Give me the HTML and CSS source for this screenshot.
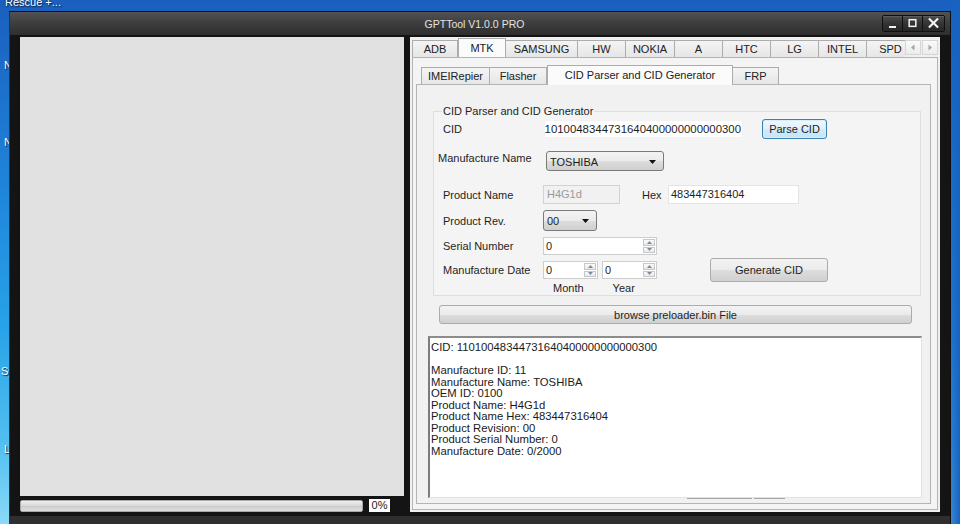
FILE: index.html
```html
<!DOCTYPE html>
<html>
<head>
<meta charset="utf-8">
<title>GPTTool V1.0.0 PRO</title>
<link rel="stylesheet" href="styles.css">
</head>
<body>
<div class="desktop">
  <div class="desk-label">Rescue +...</div>
  <span class="desk-icon di1">Ne</span>
  <span class="desk-icon di2">Ne</span>
  <span class="desk-icon di3">Sy</span>
  <span class="desk-icon di4">Lo</span>

  <div class="window">
    <div class="titlebar">
      <span class="title">GPTTool V1.0.0 PRO</span>
      <div class="controls">
        <div class="cbtn cmin"><svg width="19" height="15" viewBox="0 0 19 15"><rect x="6" y="10" width="7" height="2" fill="#f2f2f2"/></svg></div>
        <div class="cbtn cmax"><svg width="20" height="15" viewBox="0 0 20 15"><rect x="6.5" y="3.5" width="7" height="7" fill="none" stroke="#f2f2f2" stroke-width="1.6"/></svg></div>
        <div class="cbtn cclose"><svg width="22" height="15" viewBox="0 0 22 15"><path d="M7 3 L15 11 M15 3 L7 11" stroke="#f4f4f4" stroke-width="2.2" stroke-linecap="square"/></svg></div>
      </div>
    </div>

    <div class="wbody">
      <div class="leftcol">
        <div class="leftpanel"></div>
        <div class="progress-row">
          <div class="progress"></div>
          <span class="pct">0%</span>
        </div>
      </div>

      <div class="rightpanel">
        <div class="tabstrip">
          <div class="tablist">
            <div class="tab w46">ADB</div>
            <div class="tab w48 active">MTK</div>
            <div class="tab w72">SAMSUNG</div>
            <div class="tab w48">HW</div>
            <div class="tab w49">NOKIA</div>
            <div class="tab w48">A</div>
            <div class="tab w48">HTC</div>
            <div class="tab w48">LG</div>
            <div class="tab w48">INTEL</div>
            <div class="tab w48">SPD</div>
          </div>
          <div class="scrollbtns">
            <div class="sbtn"><svg width="6" height="7" viewBox="0 0 6 7"><path d="M4.5 0.5 L1 3.5 L4.5 6.5 Z" fill="#9aa6b8"/></svg></div>
            <div class="sbtn"><svg width="6" height="7" viewBox="0 0 6 7"><path d="M1.5 0.5 L5 3.5 L1.5 6.5 Z" fill="#9aa6b8"/></svg></div>
          </div>
        </div>

        <div class="tabpage">
          <div class="subtabs">
            <div class="tab w69">IMEIRepier</div>
            <div class="tab w57">Flasher</div>
            <div class="tab w186 active">CID Parser and CID Generator</div>
            <div class="tab w46">FRP</div>
          </div>

          <div class="subpage">
            <fieldset class="group">
              <legend>CID Parser and CID Generator</legend>

              <div class="row r1">
                <span class="lbl lbl-cid">CID</span>
                <div class="field cidbox"><span>11010048344731640400000000000300</span></div>
                <div class="btn parse">Parse CID</div>
              </div>

              <div class="row r2">
                <span class="lbl lbl-mname">Manufacture Name</span>
                <div class="select sel-mname"><span>TOSHIBA</span><svg width="7" height="4" viewBox="0 0 7 4"><path d="M0 0 H7 L3.5 4 Z" fill="#111"/></svg></div>
              </div>

              <div class="row r3">
                <span class="lbl">Product Name</span>
                <div class="field pname">H4G1d</div>
                <span class="hexlbl">Hex</span>
                <div class="field hexbox">483447316404</div>
              </div>

              <div class="row r4">
                <span class="lbl">Product Rev.</span>
                <div class="select sel-rev"><span>00</span><svg width="7" height="4" viewBox="0 0 7 4"><path d="M0 0 H7 L3.5 4 Z" fill="#111"/></svg></div>
              </div>

              <div class="row r5">
                <span class="lbl">Serial Number</span>
                <div class="spin sp-serial">
                  <span class="val">0</span>
                  <div class="arrows">
                    <div class="arr"><svg width="5" height="3" viewBox="0 0 5 3"><path d="M0 3 L2.5 0 L5 3 Z" fill="#7c8aa0"/></svg></div>
                    <div class="arr"><svg width="5" height="3" viewBox="0 0 5 3"><path d="M0 0 L2.5 3 L5 0 Z" fill="#7c8aa0"/></svg></div>
                  </div>
                </div>
              </div>

              <div class="row r6">
                <span class="lbl">Manufacture Date</span>
                <div class="spin sp-date">
                  <span class="val">0</span>
                  <div class="arrows">
                    <div class="arr"><svg width="5" height="3" viewBox="0 0 5 3"><path d="M0 3 L2.5 0 L5 3 Z" fill="#7c8aa0"/></svg></div>
                    <div class="arr"><svg width="5" height="3" viewBox="0 0 5 3"><path d="M0 0 L2.5 3 L5 0 Z" fill="#7c8aa0"/></svg></div>
                  </div>
                </div>
                <div class="spin sp-date sp-year">
                  <span class="val">0</span>
                  <div class="arrows">
                    <div class="arr"><svg width="5" height="3" viewBox="0 0 5 3"><path d="M0 3 L2.5 0 L5 3 Z" fill="#7c8aa0"/></svg></div>
                    <div class="arr"><svg width="5" height="3" viewBox="0 0 5 3"><path d="M0 0 L2.5 3 L5 0 Z" fill="#7c8aa0"/></svg></div>
                  </div>
                </div>
                <div class="btn generate">Generate CID</div>
              </div>

              <div class="row r7">
                <span class="month">Month</span>
                <span class="year">Year</span>
              </div>
            </fieldset>

            <div class="btn browse">browse preloader.bin File</div>

            <div class="output">CID: 11010048344731640400000000000300

Manufacture ID: 11
Manufacture Name: TOSHIBA
OEM ID: 0100
Product Name: H4G1d
Product Name Hex: 483447316404
Product Revision: 00
Product Serial Number: 0
Manufacture Date: 0/2000</div>
            <div class="scrap"><span class="s1"></span><span class="s2"></span></div>
          </div>
        </div>
      </div>
    </div>
  </div>
</div>
</body>
</html>
```
FILE: styles.css
```css
* { box-sizing: border-box; margin: 0; padding: 0; }

html, body { width: 960px; height: 524px; overflow: hidden; }

body {
  font-family: "Liberation Sans", Arial, sans-serif;
  font-size: 11px;
  color: #1e1e1e;
  background:
    linear-gradient(to right, rgba(21, 96, 192, 0) 0%, rgba(21, 96, 192, 0) 97%, #1762c2 100%),
    linear-gradient(180deg, #1a5fbd 0%, #1f84d9 35%, #27a2e8 62%, #52c0f0 85%, #8ad9f7 100%);
}

.desktop {
  position: relative;
  width: 960px;
  height: 524px;
  padding: 12px 0 0 10px;
}

.desk-label {
  position: absolute;
  left: 5px;
  top: -4px;
  color: #fff;
  font-size: 11px;
  text-shadow: 0 0 2px #0b2a55, 1px 1px 1px #0b2a55;
}

.desk-icon {
  position: absolute;
  left: 4px;
  color: #fff;
  font-size: 11px;
  text-shadow: 1px 1px 1px #123;
}
.di1 { top: 59px; }
.di2 { top: 136px; }
.di3 { top: 365px; left: 1px; }
.di4 { top: 443px; }

.window {
  position: relative;
  z-index: 1;
  width: 940px;
  height: 520px;
  background: #2f2f2f;
  box-shadow: -1px 0 0 #3b3030, 0 0 0 1px #0e0e0e;
}

/* title bar */
.titlebar {
  height: 23px;
  display: grid;
  grid-template-columns: 1fr auto 1fr;
  align-items: center;
  padding-right: 5px;
  background: linear-gradient(#525252, #3d3d3d 50%, #2e2e2e);
}
.title {
  grid-column: 2;
  color: #e2e2e2;
  font-size: 10.5px;
  margin-right: 6px;
}
.controls {
  grid-column: 3;
  justify-self: end;
  display: flex;
  height: 17px;
  border: 1px solid #101010;
  border-radius: 2px;
  overflow: hidden;
}
.cbtn {
  display: flex;
  align-items: center;
  justify-content: center;
  background: linear-gradient(#4c4c4c, #343434 50%, #262626);
  box-shadow: inset 0 1px 0 #5c5c5c;
}
.cbtn + .cbtn { border-left: 1px solid #101010; }
.cmin { width: 19px; }
.cmax { width: 20px; }
.cclose { width: 22px; }

/* window body */
.wbody {
  display: flex;
  gap: 6px;
  height: 481px;
  padding: 2px 10px 4px;
  background: #141414;
}

.leftcol {
  width: 384px;
  display: flex;
  flex-direction: column;
  gap: 3px;
}
.leftpanel {
  height: 460px;
  background: #e1e1e1;
}
.progress-row {
  display: flex;
  align-items: center;
  gap: 6px;
  height: 13px;
}
.progress {
  width: 343px;
  height: 12px;
  border: 1px solid #a9a9a9;
  border-radius: 2px;
  background: linear-gradient(#f0f0f0, #d8d8d8 45%, #cdcdcd 55%, #dedede);
}
.pct {
  width: 21px;
  height: 13px;
  background: #fff;
  line-height: 13px;
  text-align: center;
  color: #222;
}

.rightpanel {
  width: 530px;
  background: #f0f0f0;
  padding: 1px 2px 2px;
  display: flex;
  flex-direction: column;
}

/* tabs */
.tabstrip {
  display: flex;
  height: 19px;
  position: relative;
  z-index: 1;
}
.tablist {
  display: flex;
  align-items: flex-end;
  width: 493px;
  overflow: hidden;
}
.tab {
  flex: none;
  height: 17px;
  display: flex;
  align-items: center;
  justify-content: center;
  border: 1px solid #acacac;
  border-bottom: none;
  border-left: none;
  background: linear-gradient(#f4f4f4, #e6e6e6);
  color: #222;
  white-space: nowrap;
}
.tab:first-child { border-left: 1px solid #acacac; }
.tab.active {
  height: 20px;
  margin-bottom: -1px;
  background: #fbfbfb;
  border-left: 1px solid #acacac;
  padding-bottom: 2px;
}
.tab.active + .tab { border-left: none; }
.w46 { width: 46px; }
.w48 { width: 48px; }
.w49 { width: 49px; }
.w57 { width: 57px; }
.w69 { width: 69px; }
.w72 { width: 72px; }
.w186 { width: 186px; }

.scrollbtns {
  display: flex;
  gap: 1px;
  padding-top: 2px;
}
.sbtn {
  width: 16px;
  height: 15px;
  display: flex;
  align-items: center;
  justify-content: center;
  border: 1px solid #d6d6d6;
  background: linear-gradient(#fafafa, #ececec);
}

.tabpage {
  flex: 1;
  display: flex;
  flex-direction: column;
  border: 1px solid #b4b4b4;
  background: #f4f4f4;
  padding: 7px 6px 5px 3px;
}

.subtabs {
  display: flex;
  align-items: flex-end;
  height: 19px;
  padding-left: 5px;
  position: relative;
  z-index: 1;
}

.subpage {
  flex: 1;
  border: 1px solid #b4b4b4;
  background: #f1f1f1;
  display: flex;
  flex-direction: column;
}

/* group box */
.group {
  margin: 20px 9px 0 16px;
  border: 1px solid #dedede;
  background: #f4f4f4;
  padding: 0 0 1px 9px;
}
.group legend {
  margin-left: -1px;
  padding: 0 1px;
  line-height: 13px;
  color: #1e1e1e;
}

.row {
  display: flex;
  align-items: center;
}
.lbl { width: 100px; flex: none; }

.field {
  height: 19px;
  border: 1px solid #e4e4e4;
  background: #fff;
  padding-left: 2px;
  line-height: 17px;
  white-space: nowrap;
}

.btn {
  display: flex;
  align-items: center;
  justify-content: center;
  border: 1px solid #acacac;
  border-radius: 3px;
  background: linear-gradient(#f3f3f3, #ebebeb 50%, #dddddd 51%, #d0d0d0);
  color: #1e1e1e;
}

.select {
  display: flex;
  align-items: center;
  justify-content: space-between;
  border: 1px solid #7a7a7a;
  border-radius: 3px;
  background: linear-gradient(#f3f3f3, #ebebeb 50%, #dddddd 51%, #cfcfcf);
  padding: 1px 7px 0 3px;
}

.r1 { height: 20px; margin-top: 1px; }
.lbl-cid { width: 101px; }
.cidbox {
  width: 199px;
  height: 18px;
  display: flex;
  justify-content: flex-end;
  overflow: hidden;
  padding: 0 1px 0 0;
  border-color: #f2f2f2;
  font-size: 11.4px;
}
.parse {
  width: 65px;
  height: 20px;
  margin-left: 19px;
  border-color: #3c7fb1;
  background: linear-gradient(#eef7fd, #e2f1fb 50%, #d2eaf9 51%, #c6e4f7);
  box-shadow: inset 0 0 0 1px #d9eefb;
}

.r2 { height: 20px; margin-top: 12px; align-items: flex-start; }
.lbl-mname { width: 108px; margin-left: -5px; margin-top: 1px; }
.sel-mname { width: 118px; height: 20px; }

.r3 { height: 19px; margin-top: 14px; }
.pname {
  width: 77px;
  background: #f1f1f1;
  border-color: #d2d2d2;
  color: #9a9a9a;
  padding-left: 3px;
}
.hexlbl { width: 26px; margin-left: 22px; }
.hexbox { width: 131px; }

.r4 { height: 21px; margin-top: 6px; }
.sel-rev { width: 54px; height: 21px; }

.spin {
  display: flex;
  height: 18px;
  border: 1px solid #cdcdcd;
  background: #fff;
  padding: 1px;
}
.spin .val {
  flex: 1;
  line-height: 15px;
  padding-left: 1px;
}
.arrows {
  width: 12px;
  display: flex;
  flex-direction: column;
  gap: 1px;
}
.arr {
  flex: 1;
  display: flex;
  align-items: center;
  justify-content: center;
  border: 1px solid #c8c8c8;
  background: linear-gradient(#fbfbfb, #e8e8e8);
}

.r5 { height: 18px; margin-top: 6px; }
.sp-serial { width: 114px; }

.r6 { height: 24px; margin-top: 3px; }
.sp-date { width: 55px; }
.sp-year { margin-left: 4px; }
.generate {
  width: 118px;
  height: 24px;
  margin-left: 53px;
}

.r7 { height: 12px; line-height: 12px; }
.month { margin-left: 110px; }
.year { margin-left: 29px; }

.browse {
  width: 473px;
  height: 19px;
  margin: 9px 0 0 22px;
}

.output {
  width: 494px;
  height: 162px;
  margin: 12px 0 0 11px;
  background: #fff;
  border-style: solid;
  border-width: 2px 1px 1px 2px;
  border-color: #8c8c8c #e2e2e2 #e2e2e2 #7c7c7c;
  padding: 4px 2px 1px 1px;
  font-size: 11.3px;
  line-height: 11.5px;
  white-space: pre-line;
  color: #1a1a1a;
}

.scrap {
  display: flex;
  gap: 2px;
  height: 2px;
  margin: 0 0 0 270px;
}
.scrap span { height: 1px; background: #a6a6a6; }
.s1 { width: 65px; }
.s2 { width: 31px; }
```
